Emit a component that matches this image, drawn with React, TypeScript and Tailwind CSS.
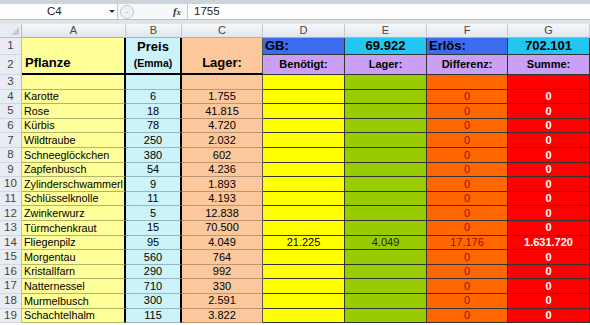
import React from 'react';

const plants: [string, string, string][] = [
  ['Karotte', '6', '1.755'],
  ['Rose', '18', '41.815'],
  ['Kürbis', '78', '4.720'],
  ['Wildtraube', '250', '2.032'],
  ['Schneeglöckchen', '380', '602'],
  ['Zapfenbusch', '54', '4.236'],
  ['Zylinderschwammerl', '9', '1.893'],
  ['Schlüsselknolle', '11', '4.193'],
  ['Zwinkerwurz', '5', '12.838'],
  ['Türmchenkraut', '15', '70.500'],
  ['Fliegenpilz', '95', '4.049'],
  ['Morgentau', '560', '764'],
  ['Kristallfarn', '290', '992'],
  ['Natternessel', '710', '330'],
  ['Murmelbusch', '300', '2.591'],
  ['Schachtelhalm', '115', '3.822'],
];

const cols = ['A', 'B', 'C', 'D', 'E', 'F', 'G'];

function RowHead({ n }: { n: number }) {
  return (
    <div className="flex items-center justify-center bg-[#e9edf3] border-r border-b border-r-[#b6bdc8] border-b-[#d3d8df] text-[11.5px] text-[#444]">
      {n}
    </div>
  );
}

function FormulaBar() {
  return (
    <div className="h-[24px] bg-[#dfe4ea] border-t-[4px] border-[#cdd4dc] flex flex-col">
      <div className="h-[16px] flex bg-white border-b border-[#b8c0ca]">
        <div className="w-[118px] flex items-center relative border-r border-[#c4cad3]">
          <span className="absolute left-[47px] text-[11.5px] text-[#222]">C4</span>
          <span className="absolute left-[109px] top-[6px] w-0 h-0 border-l-[3px] border-r-[3px] border-t-[3px] border-l-transparent border-r-transparent border-t-[#333]" />
        </div>
        <div className="w-[70px] flex items-center bg-[#f7f8fa] border-r border-[#c4cad3]">
          <div className="ml-[2px] w-[14px] h-[14px] rounded-full border border-[#c3c9d1] bg-[#eef1f4] flex items-center justify-center">
            <span className="text-[8px] leading-none text-[#9aa3ad]">-</span>
          </div>
          <span className="ml-[39px] text-[11px] italic font-bold text-[#333] font-['Liberation_Serif',serif]">
            f<span className="text-[8px]">x</span>
          </span>
        </div>
        <div className="flex-1 flex items-center pl-[6px] text-[11.5px] text-[#222]">1755</div>
      </div>
    </div>
  );
}

export default function App() {
  const dark = 'border-r border-b border-[#333]';
  return (
    <div className="w-[590px] h-[325px] overflow-hidden bg-white font-['Liberation_Sans',Arial,sans-serif] text-black">
      <FormulaBar />
      <div className="grid grid-cols-[22px_104px_56px_81px_82px_82px_81px_82px] grid-rows-[14px_17px_20px_repeat(17,14.6px)]">
        {/* column headers */}
        <div className="relative bg-[#e9edf3] border-r border-b border-[#b6bdc8]">
          <span className="absolute right-[2px] bottom-[2px] w-0 h-0 border-l-[8px] border-t-[8px] border-l-transparent border-t-transparent border-r-0 border-b-0 [border-bottom:8px_solid_#c5ccd5]" />
        </div>
        {cols.map((c) => (
          <div
            key={c}
            className="flex items-center justify-center bg-gradient-to-b from-[#f5f7fa] to-[#e2e7ed] border-r border-b border-r-[#c4cad3] border-b-[#a8b0bb] text-[11px] text-[#444]"
          >
            {c}
          </div>
        ))}

        {/* row 1 */}
        <RowHead n={1} />
        <div className="bg-[#ffff99] border-r-2 border-black" />
        <div className="bg-[#ccf3fa] border-r-2 border-black flex items-center justify-center text-[13px] font-bold">Preis</div>
        <div className="bg-[#fcc89b] border-r border-[#555]" />
        <div className={`bg-[#3b6ced] ${dark} flex items-center px-[2px] text-[13px] font-bold`}>GB:</div>
        <div className={`bg-[#22c6f2] ${dark} flex items-center justify-center text-[13px] font-bold`}>69.922</div>
        <div className={`bg-[#3b6ced] ${dark} flex items-center px-[2px] text-[13px] font-bold`}>Erlös:</div>
        <div className={`bg-[#22c6f2] ${dark} flex items-center justify-center text-[13px] font-bold`}>702.101</div>

        {/* row 2 */}
        <RowHead n={2} />
        <div className="bg-[#ffff99] border-r-2 border-b-2 border-black flex items-end pb-[1px] px-[3px] text-[13px] font-bold">Pflanze</div>
        <div className="bg-[#ccf3fa] border-r-2 border-b-2 border-black flex items-center justify-center text-[10.5px] font-bold">(Emma)</div>
        <div className="bg-[#fcc89b] border-r border-[#555] border-b-2 border-b-black flex items-end justify-center pb-[1px] text-[13px] font-bold">Lager:</div>
        {['Benötigt:', 'Lager:', 'Differenz:', 'Summe:'].map((t) => (
          <div key={t} className={`bg-[#c9a0f5] ${dark} flex items-center justify-center text-[11px] font-bold`}>
            {t}
          </div>
        ))}

        {/* row 3 */}
        <RowHead n={3} />
        <div className="bg-[#ffff99] border-r-2 border-r-black border-b border-b-black/30" />
        <div className="bg-[#ccf3fa] border-r-2 border-r-black border-b border-b-black/25" />
        <div className="bg-[#fcc89b] border-r border-r-[#555] border-b border-b-black/25" />
        <div className={`bg-[#ffff00] ${dark}`} />
        <div className={`bg-[#99cc00] ${dark}`} />
        <div className={`bg-[#ff6600] ${dark}`} />
        <div className={`bg-[#ff0000] ${dark}`} />

        {plants.map(([name, price, stock], i) => {
          const hit = name === 'Fliegenpilz';
          return (
            <React.Fragment key={name}>
              <RowHead n={i + 4} />
              <div className="bg-[#ffff99] border-r-2 border-r-black border-b border-b-black/30 flex items-center pl-[2px] text-[10.8px] whitespace-nowrap">
                {name}
              </div>
              <div className="bg-[#ccf3fa] border-r-2 border-r-black border-b border-b-black/25 flex items-center justify-center text-[11px]">
                {price}
              </div>
              <div className="bg-[#fcc89b] border-r border-r-[#555] border-b border-b-black/25 flex items-center justify-center text-[11px]">
                {stock}
              </div>
              <div className={`bg-[#ffff00] ${dark} flex items-center justify-center text-[11px]`}>{hit ? '21.225' : ''}</div>
              <div className={`bg-[#99cc00] ${dark} flex items-center justify-center text-[11px] text-[#1a2a00]`}>{hit ? '4.049' : ''}</div>
              <div className={`bg-[#ff6600] ${dark} flex items-center justify-center text-[11px] text-[#8a1c00]`}>{hit ? '17.176' : '0'}</div>
              <div className={`bg-[#ff0000] ${dark} flex items-center justify-center text-[11px] font-bold text-white`}>{hit ? '1.631.720' : '0'}</div>
            </React.Fragment>
          );
        })}
      </div>
    </div>
  );
}
